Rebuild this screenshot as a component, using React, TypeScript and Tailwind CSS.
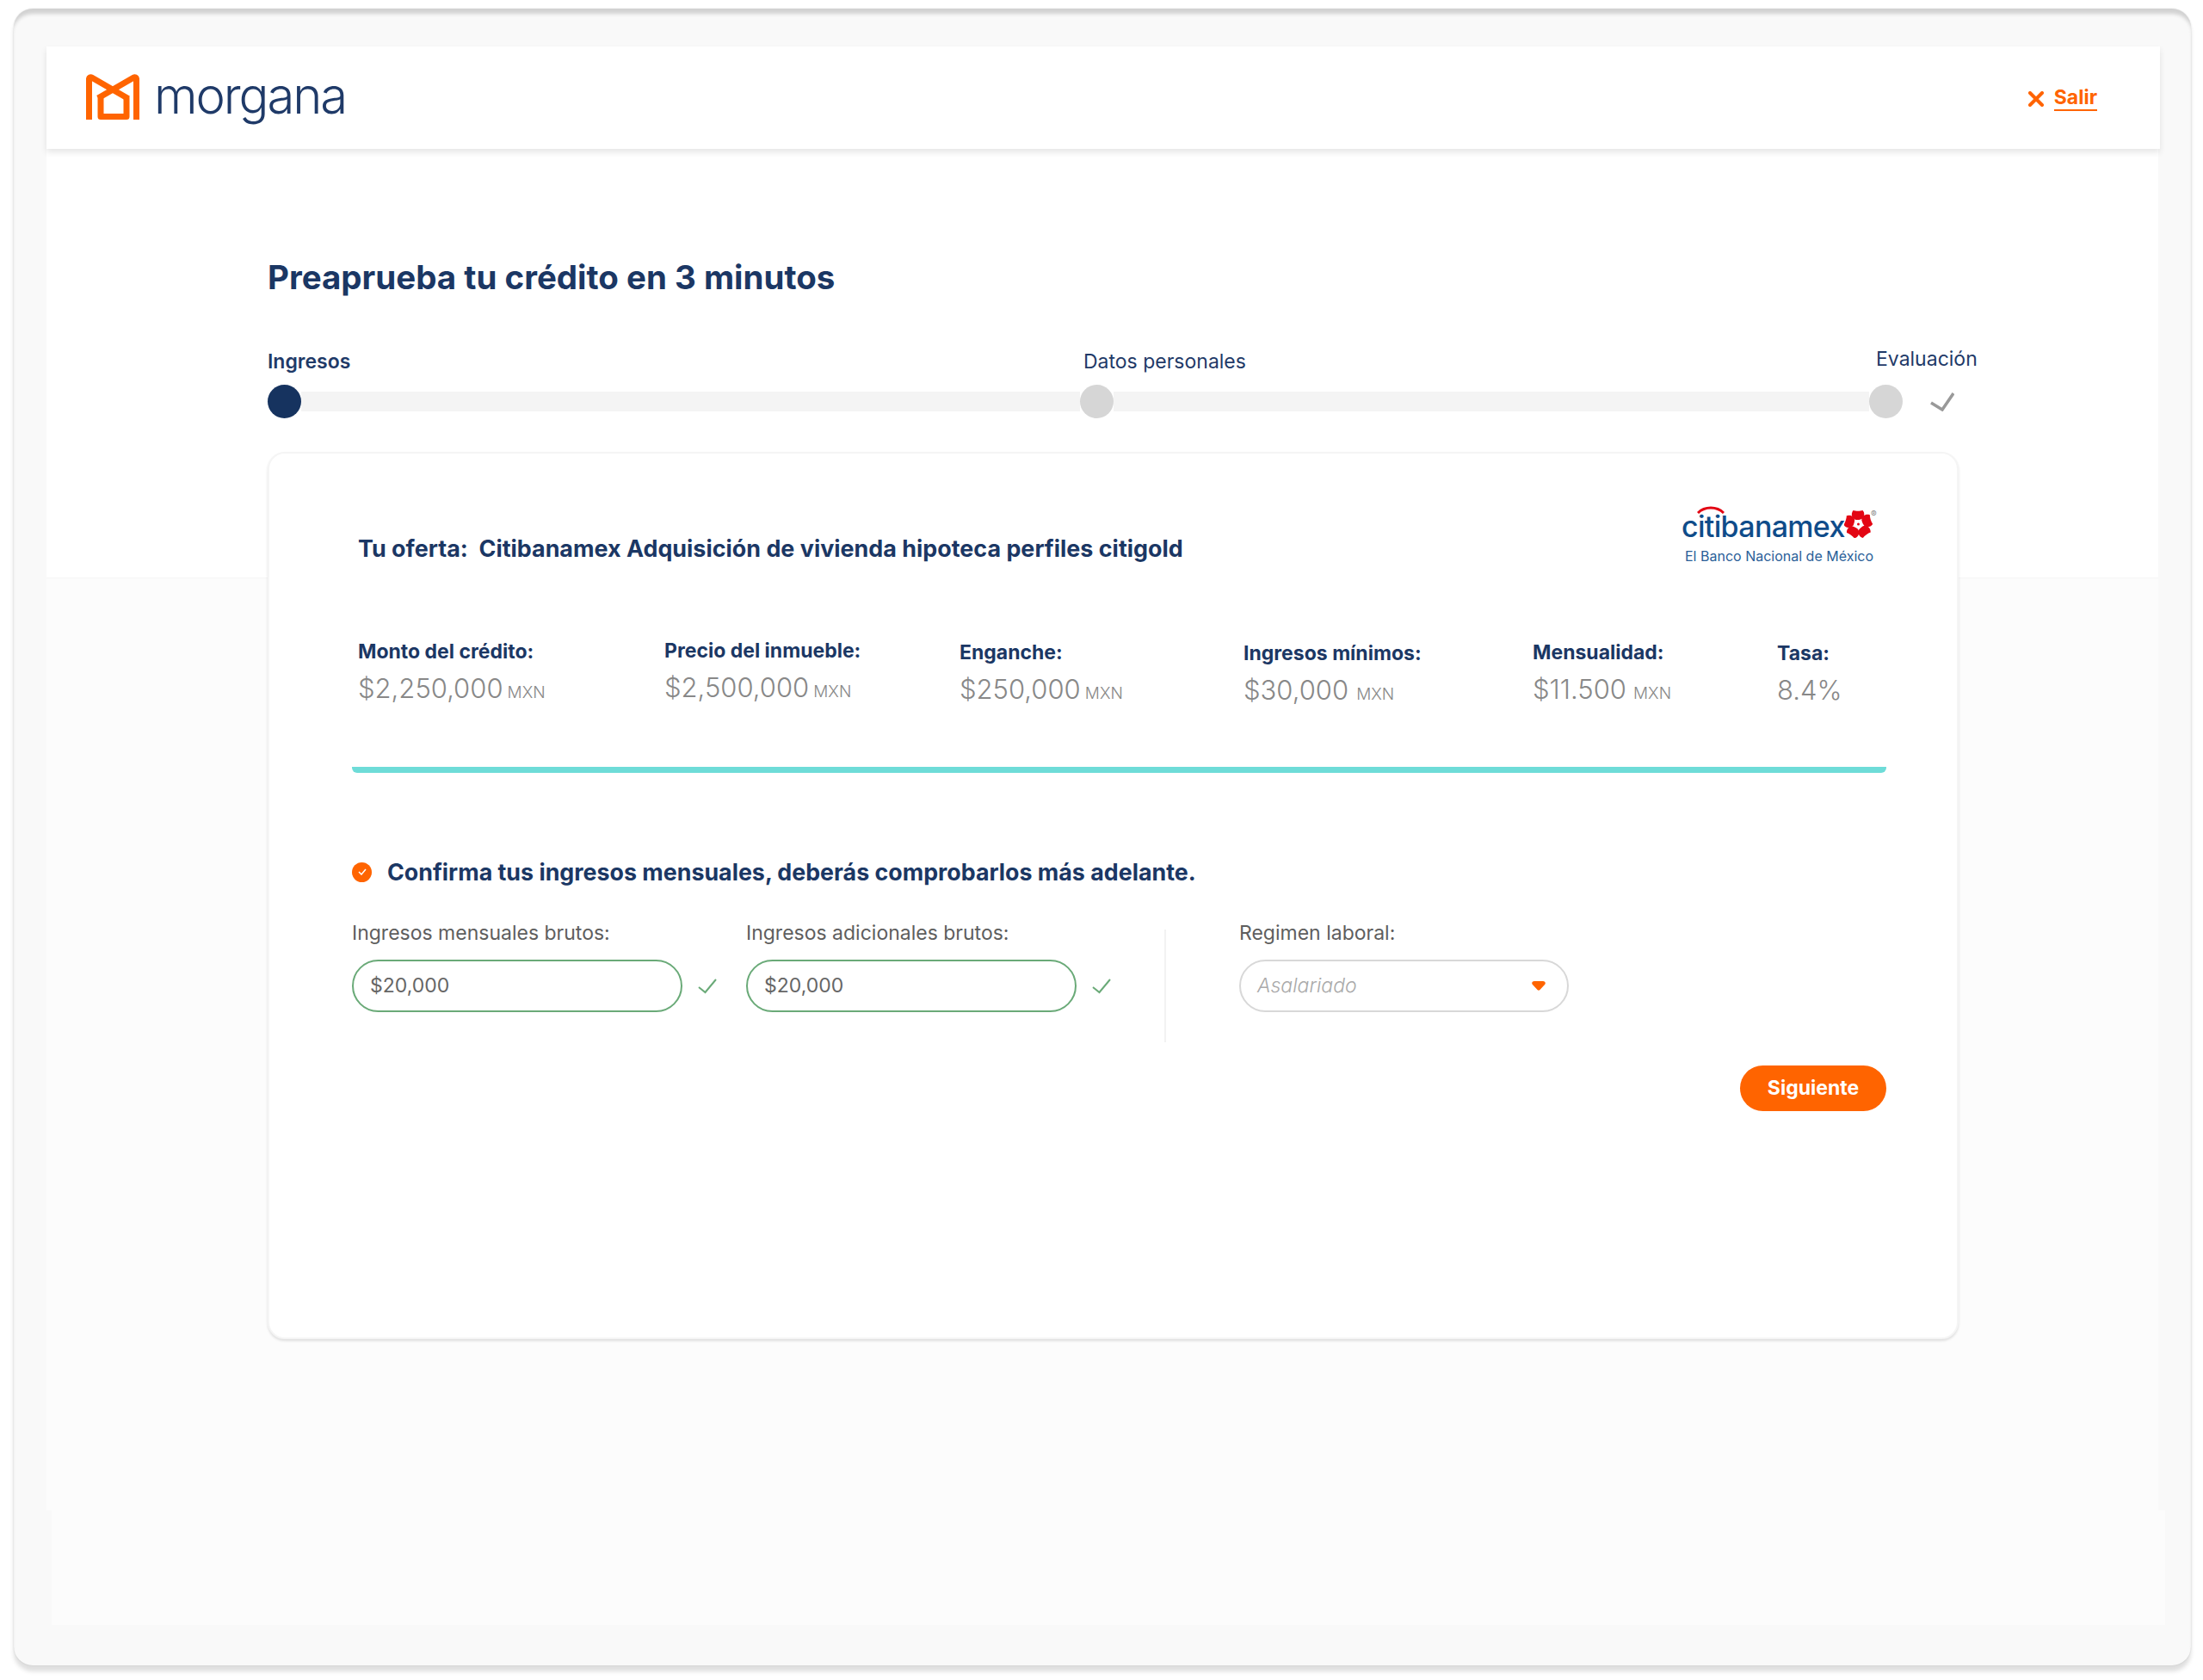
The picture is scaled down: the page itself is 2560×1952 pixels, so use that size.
const font = "font-['Inter',sans-serif]";

const metrics = [
  { label: "Monto del crédito:", value: "$2,250,000", unit: "MXN", shift: "-mt-[1px]", gap: "ml-[5px]" },
  { label: "Precio del inmueble:", value: "$2,500,000", unit: "MXN", shift: "-mt-[2px]", gap: "ml-[5px]" },
  { label: "Enganche:", value: "$250,000", unit: "MXN", shift: "", gap: "ml-[5px]" },
  { label: "Ingresos mínimos:", value: "$30,000", unit: "MXN", shift: "mt-[1px]", gap: "ml-[9px]" },
  { label: "Mensualidad:", value: "$11.500", unit: "MXN", shift: "", gap: "ml-[8px]" },
  { label: "Tasa:", value: "8.4%", unit: "", shift: "mt-[1px]", gap: "" },
];

function Logo() {
  return (
    <svg width="64" height="54" viewBox="0 0 64 54" fill="none" stroke="#ff6400" strokeWidth="7" strokeLinejoin="round">
      <path d="M3.500 54V6.500a2 2 0 0 1 3-1.500L48 29" />
      <path d="M58.500 54V6.500a2 2 0 0 0-3-1.500L14 29" />
      <path d="M17 26v24.500h30V26" />
    </svg>
  );
}

function Flower() {
  return (
    <svg width="33" height="32" viewBox="0 0 33 32" fill="#e30613">
      <g transform="translate(16.500 16)">
        {[0, 72, 144, 216, 288].map((r) => (
          <path key={r} transform={`rotate(${r})`} d="M-3-5C-8-7-9-12-6-16c3 1 8 1 11 0 3 3 2 8-1 10-2 1-4 1-7 1z" />
        ))}
        <circle r="4" fill="#fff" />
        <circle r="1.500" fill="#e30613" />
      </g>
    </svg>
  );
}

function Check({ color, width = 2 }: { color: string; width?: number }) {
  return (
    <svg width="22" height="18" viewBox="0 0 22 18" fill="none" stroke={color} strokeWidth={width}>
      <path d="M1 10l7.500 6L21 1" />
    </svg>
  );
}

function MoneyField({ label, ml }: { label: string; ml: string }) {
  return (
    <div className={ml}>
      <p className="text-[23px] leading-[30px] text-[#5e5e5e]">{label}</p>
      <div className="mt-[16px] flex items-center">
        <div className="flex h-[61px] w-[384px] items-center rounded-full border-2 border-[#6aaa78] pl-[19px] text-[23px] text-[#666666]">
          $20,000
        </div>
        <div className="ml-[18px] mt-[1px]">
          <Check color="#6aaa78" />
        </div>
      </div>
    </div>
  );
}

export default function App() {
  return (
    <div className={`h-[1952px] w-[2560px] overflow-hidden bg-white pl-[16px] pt-[10px] ${font}`}>
      <div className="h-[1925px] w-[2530px] rounded-[22px] bg-[#f9f9f9] pl-[38px] pt-[44px] shadow-[0_7px_5px_rgba(0,0,0,0.13),0_0_2px_rgba(0,0,0,0.12),inset_0_8px_4px_-2px_rgba(0,0,0,0.16)]">
        {/* Header */}
        <header className="relative z-10 flex h-[119px] w-[2456px] items-center justify-between bg-white pl-[46px] pr-[73px] shadow-[0_4px_7px_rgba(0,0,0,0.1)]">
          <div className="flex items-center">
            <div className="-mt-[4px]">
              <Logo />
            </div>
            <span className="ml-[15px] mt-[-6px] text-[58px] font-light leading-none tracking-[-0.036em] text-[#1f3a68]">morgana</span>
          </div>
          <div className="flex items-center text-[#ff6400]">
            <svg className="mt-[2px]" width="18" height="18" viewBox="0 0 18 18" fill="none" stroke="#ff6400" strokeWidth="4" strokeLinecap="round">
              <path d="M2 2l14 14M16 2L2 16" />
            </svg>
            <span className="ml-[12px] border-b-2 border-[#ff6400] text-[23px] font-bold leading-[28px]">Salir</span>
          </div>
        </header>

        {/* Main */}
        <main className="h-[1582px] w-[2454px] bg-[linear-gradient(#ffffff_0,#ffffff_498px,#f5f5f5_498px,#f5f5f5_499px,#fcfcfc_499px)] pl-[257px] pt-[124px]">
          <h1 className="text-[38.5px] font-bold leading-[50px] text-[#1b3764]">Preaprueba tu crédito en 3 minutos</h1>

          {/* Stepper */}
          <div className="mt-[58px] flex h-[30px] items-center text-[23px] text-[#1f3a68]">
            <span className="w-[948px] font-semibold">Ingresos</span>
            <span className="w-[921px]">Datos personales</span>
            <span className="-mt-[6px]">Evaluación</span>
          </div>
          <div className="mt-[12px] flex items-center">
            <div className="h-[39px] w-[39px] rounded-full bg-[#16335f]" />
            <div className="h-[23px] w-[905px] bg-[#f4f4f4]" />
            <div className="h-[39px] w-[39px] rounded-full bg-[#d6d6d6]" />
            <div className="h-[23px] w-[878px] bg-[#f4f4f4]" />
            <div className="h-[39px] w-[39px] rounded-full bg-[#d6d6d6]" />
            <div className="ml-[32px]">
              <svg width="28" height="22" viewBox="0 0 28 22" fill="none" stroke="#999999" strokeWidth="3.500">
                <path d="M1 12l13 8L27 1" />
              </svg>
            </div>
          </div>

          {/* Card */}
          <section className="mt-[39px] h-[1031px] w-[1965px] rounded-[20px] border-2 border-[#f5f5f5] bg-white pl-[96px] pr-[82px] shadow-[0_2px_3px_rgba(0,0,0,0.12)]">
            <div className="flex h-[130px] items-start justify-between pl-[7px]">
              <h2 className="mt-[93px] text-[26.900px] font-bold leading-[34px] text-[#1b3764]">
                Tu oferta:&nbsp; Citibanamex Adquisición de vivienda hipoteca perfiles citigold
              </h2>
              <div className="mr-[13px] mt-[67px] w-[225px]">
                <div className="relative flex h-[36px] items-center">
                  <span className="text-[34px] font-medium leading-[36px] tracking-[-0.02em] text-[#0f4c8a]">citibanamex</span>
                  <svg className="absolute left-[18px] -top-[6px]" width="32" height="9" viewBox="0 0 32 9" fill="none" stroke="#e30613" strokeWidth="3">
                    <path d="M1 8C9 0 23 0 31 8" />
                  </svg>
                  <div className="absolute left-[189px] -top-[1px]">
                    <Flower />
                  </div>
                  <span className="absolute left-[220px] -top-[3px] text-[10px] leading-[12px] text-[#888888]">®</span>
                </div>
                <p className="mt-[6px] pl-[4px] text-[16px] leading-[20px] text-[#2a6099]">El Banco Nacional de México</p>
              </div>
            </div>

            {/* Metrics */}
            <div className="mt-[86px] grid grid-cols-[356px_343px_330px_336px_284px_1fr] pl-[7px]">
              {metrics.map((m) => (
                <div key={m.label} className={m.shift}>
                  <p className="text-[23px] font-bold leading-[30px] text-[#1b3764]">{m.label}</p>
                  <p className="mt-[8px] leading-[40px] text-[#888888]">
                    <span className="text-[31px] font-light">{m.value}</span>
                    {m.unit && <span className={`${m.gap} text-[19px] font-light`}>{m.unit}</span>}
                  </p>
                </div>
              ))}
            </div>

            <div className="mt-[64px] h-[7px] rounded-b-[6px] bg-[#6edcd8]" />

            {/* Income */}
            <div className="mt-[97px] flex items-center">
              <div className="flex h-[23px] w-[23px] items-center justify-center rounded-full bg-[#ff6400]">
                <svg width="10" height="8" viewBox="0 0 10 8" fill="none" stroke="#ffffff" strokeWidth="1.500">
                  <path d="M1 4l3 3 5-6" />
                </svg>
              </div>
              <p className="ml-[18px] text-[26.800px] font-bold leading-[36px] text-[#1b3764]">
                Confirma tus ingresos mensuales, deberás comprobarlos más adelante.
              </p>
            </div>

            <div className="mt-[38px] flex items-start">
              <MoneyField label="Ingresos mensuales brutos:" ml="" />
              <MoneyField label="Ingresos adicionales brutos:" ml="ml-[34px]" />
              <div className="ml-[62px] mt-[11px] h-[131px] w-[2px] bg-[#f2f2f2]" />
              <div className="ml-[85px]">
                <p className="text-[23px] leading-[30px] text-[#5e5e5e]">Regimen laboral:</p>
                <div className="mt-[16px] flex h-[61px] w-[383px] items-center justify-between rounded-full border-2 border-[#d8d8d8] pl-[19px] pr-[25px]">
                  <span className="text-[23px] font-light italic text-[#aaaaaa]">Asalariado</span>
                  <svg width="16" height="11" viewBox="0 0 16 11" fill="#ff6400">
                    <path d="M3 0h10c2.500 0 3.500 2 2.300 3.800L9.500 10c-.800 1-2.200 1-3 0L.700 3.800C-.500 2 .500 0 3 0z" />
                  </svg>
                </div>
              </div>
            </div>

            <div className="mt-[27px] flex justify-end">
              <div className="flex h-[53px] w-[170px] items-center justify-center rounded-full bg-[#ff6400] text-[23px] font-bold text-white">
                Siguiente
              </div>
            </div>
          </section>
        </main>

        <div className="ml-[6px] h-[133px] w-[2456px] bg-[#fcfcfc]" />
      </div>
    </div>
  );
}
